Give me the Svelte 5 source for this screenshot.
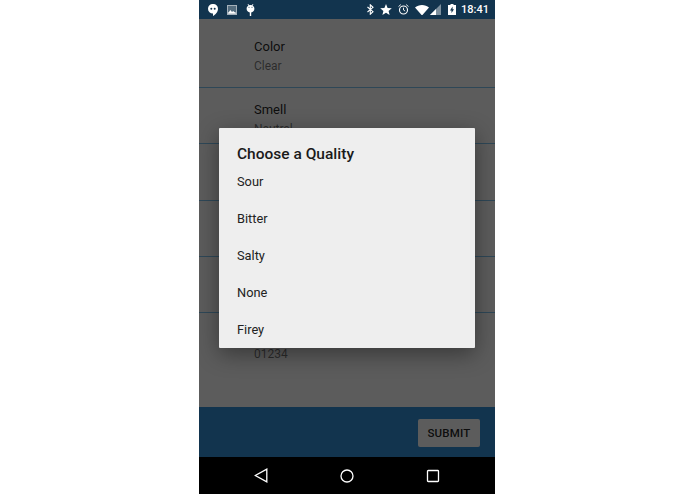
<script>
  const rows = [
    { label: 'Color', value: 'Clear' },
    { label: 'Smell', value: 'Neutral' },
    { label: '', value: '' },
    { label: '', value: '' },
    { label: '', value: '' },
    { label: '', value: '01234' }
  ];
  const qualities = ['Sour', 'Bitter', 'Salty', 'None', 'Firey'];
</script>

<div class="phone">
  <header class="status">
    <div class="icons">
      <svg width="10" height="12" viewBox="0 0 10 12">
        <path fill="#fff" d="M5 0a4.800 4.800 0 0 0-5 4.800A4.800 4.800 0 0 0 5 9.600V12c2.500-1.300 5-3.900 5-7.200A4.800 4.800 0 0 0 5 0z" />
        <circle cx="3.300" cy="4.800" r="1" fill="#12344e" />
        <circle cx="6.700" cy="4.800" r="1" fill="#12344e" />
      </svg>
      <svg width="10" height="10" viewBox="0 0 10 10">
        <rect width="10" height="10" fill="#fff" opacity=".62" />
        <rect x="1" y="1" width="8" height="6" fill="#12344e" opacity=".55" />
        <path fill="#fff" d="M1 8.500 3.300 5l1.700 2 1.200-1L9 8.500z" />
      </svg>
      <svg width="9" height="12" viewBox="0 0 9 12">
        <path stroke="#fff" stroke-width=".8" d="M2 0l1 2M7 0 6 2" />
        <path fill="#fff" d="M4.500 1C2 1 .6 2.800.6 4.800c0 2 1.600 3.500 3.200 3.700V12h1.400V8.500c1.600-.2 3.200-1.700 3.200-3.700C8.400 2.800 7 1 4.500 1z" />
        <circle cx="3" cy="3.200" r=".5" fill="#12344e" />
        <circle cx="6" cy="3.200" r=".5" fill="#12344e" />
      </svg>
    </div>
    <div class="icons right">
      <svg width="7" height="11" viewBox="0 0 7 11">
        <path fill="none" stroke="#fff" stroke-width="1.100" d="M.5 3 6 7.700 3.300 10.200V.8L6 3.300.5 8" />
      </svg>
      <svg class="star" width="12" height="11" viewBox="0 0 12 11">
        <path fill="#fff" d="M6 0l1.600 3.900 4.200.3-3.200 2.700 1 4.100L6 8.800 2.400 11l1-4.100L.2 4.200l4.200-.3z" />
      </svg>
      <svg class="alarm" width="11" height="11" viewBox="0 0 11 11">
        <circle cx="5.500" cy="6" r="4" fill="none" stroke="#fff" stroke-width="1.100" />
        <path fill="none" stroke="#fff" stroke-width=".9" d="M5.500 3.700V6l1.600 1M.5 2.600 2.800.6M10.500 2.600 8.200.6" />
      </svg>
      <svg class="wifi" width="14" height="10" viewBox="0 0 14 10">
        <path fill="#fff" d="M0 2.600C1.900 1 4.300 0 7 0s5.100 1 7 2.600L7 10.500z" />
      </svg>
      <svg class="signal" width="11" height="11" viewBox="0 0 11 11">
        <path fill="#fff" opacity=".45" d="M11 0v11H0z" />
        <path fill="#fff" d="M6 5v6H0z" />
      </svg>
      <svg class="battery" width="8" height="11" viewBox="0 0 8 11">
        <path fill="#fff" d="M2.500 0h3v1H8v10H0V1h2.500z" />
        <path fill="#12344e" d="M4.600 2.500 2 6.500h1.500V9L6 5.200H4.600z" />
      </svg>
      <span class="time">18:41</span>
    </div>
  </header>

  <div class="content">
    <main class="list">
      {#each rows as row, i}
        <div class="row" class:first={i === 0} class:last={i === rows.length - 1}>
          <div class="label">{row.label}</div>
          <div class="value">{row.value}</div>
        </div>
      {/each}
    </main>
    <footer class="actions">
      <button class="submit">SUBMIT</button>
    </footer>

    <div class="scrim">
      <div class="dialog">
        <h2>Choose a Quality</h2>
        <ul>
          {#each qualities as q}
            <li>{q}</li>
          {/each}
        </ul>
      </div>
    </div>
  </div>

  <nav class="nav">
    <svg width="14" height="15" viewBox="0 0 14 15">
      <path fill="none" stroke="#fff" stroke-width="1.300" d="M12.800 1.200v12.600L1.300 7.500z" />
    </svg>
    <svg width="14" height="14" viewBox="0 0 14 14">
      <circle cx="7" cy="7" r="6" fill="none" stroke="#fff" stroke-width="1.300" />
    </svg>
    <svg width="14" height="14" viewBox="0 0 14 14">
      <rect x="1.500" y="1.500" width="11" height="11" rx=".8" fill="none" stroke="#fff" stroke-width="1.300" />
    </svg>
  </nav>
</div>

<style>
  :global(body) {
    background: #fff;
  }
  .phone {
    width: 296px;
    height: 494px;
    margin-left: 199px;
    display: flex;
    flex-direction: column;
    font-family: Roboto, "Liberation Sans", sans-serif;
    overflow: hidden;
  }
  .status {
    height: 19px;
    flex: none;
    background: #12344e;
    display: flex;
    justify-content: space-between;
    align-items: center;
    padding: 0 6px 0 9px;
  }
  .icons {
    display: flex;
    align-items: center;
    gap: 9px;
  }
  .icons.right {
    gap: 0;
  }
  .star {
    margin-left: 6px;
  }
  .alarm {
    margin-left: 6px;
  }
  .wifi {
    margin-left: 6px;
  }
  .signal {
    margin-left: 1px;
  }
  .battery {
    margin-left: 7px;
  }
  .time {
    margin-left: 5px;
    color: #fff;
    font-size: 11px;
    font-weight: 500;
  }
  .content {
    flex: 1;
    position: relative;
    display: flex;
    flex-direction: column;
  }
  .list {
    flex: 1;
    background: #fff;
  }
  .row {
    height: 56.300px;
    box-sizing: border-box;
    padding: 13px 0 0 55px;
    border-bottom: 1px solid #7fc4f0;
  }
  .row.first {
    height: 69px;
    padding-top: 18.500px;
  }
  .row.last {
    border-bottom: none;
  }
  .label {
    height: 18px;
    font-size: 13px;
    line-height: 18px;
    color: rgba(0, 0, 0, 0.87);
  }
  .value {
    height: 16px;
    margin-top: 2px;
    font-size: 12px;
    line-height: 16px;
    color: rgba(0, 0, 0, 0.54);
  }
  .actions {
    height: 50px;
    flex: none;
    background: #3290d9;
    display: flex;
    justify-content: flex-end;
    align-items: center;
    padding-right: 15px;
  }
  .submit {
    width: 62px;
    height: 28px;
    margin-top: 1px;
    padding: 0;
    border: none;
    border-radius: 2px;
    background: #fff;
    color: rgba(0, 0, 0, 0.87);
    font-family: inherit;
    font-size: 11.500px;
    font-weight: 500;
    letter-spacing: 0.2px;
  }
  /* dims the list and footer while the dialog is open */
  .scrim {
    position: absolute;
    inset: 0;
    background: rgba(0, 0, 0, 0.64);
  }
  .dialog {
    position: absolute;
    left: 20px;
    top: 109px;
    width: 256px;
    height: 220px;
    background: #eee;
    border-radius: 1px;
    box-shadow: 0 6px 22px rgba(0, 0, 0, 0.4);
  }
  h2 {
    margin: 0;
    padding: 16.500px 0 0 18px;
    font-size: 15.500px;
    line-height: 19px;
    font-weight: 500;
    color: #1a1a1a;
  }
  ul {
    list-style: none;
    margin: -0.500px 0 0;
    padding: 0 0 0 18px;
  }
  li {
    height: 37px;
    line-height: 37px;
    font-size: 12.800px;
    color: #222;
  }
  .nav {
    height: 37px;
    flex: none;
    background: #000;
    display: flex;
    justify-content: center;
    align-items: center;
    gap: 72px;
  }
</style>
